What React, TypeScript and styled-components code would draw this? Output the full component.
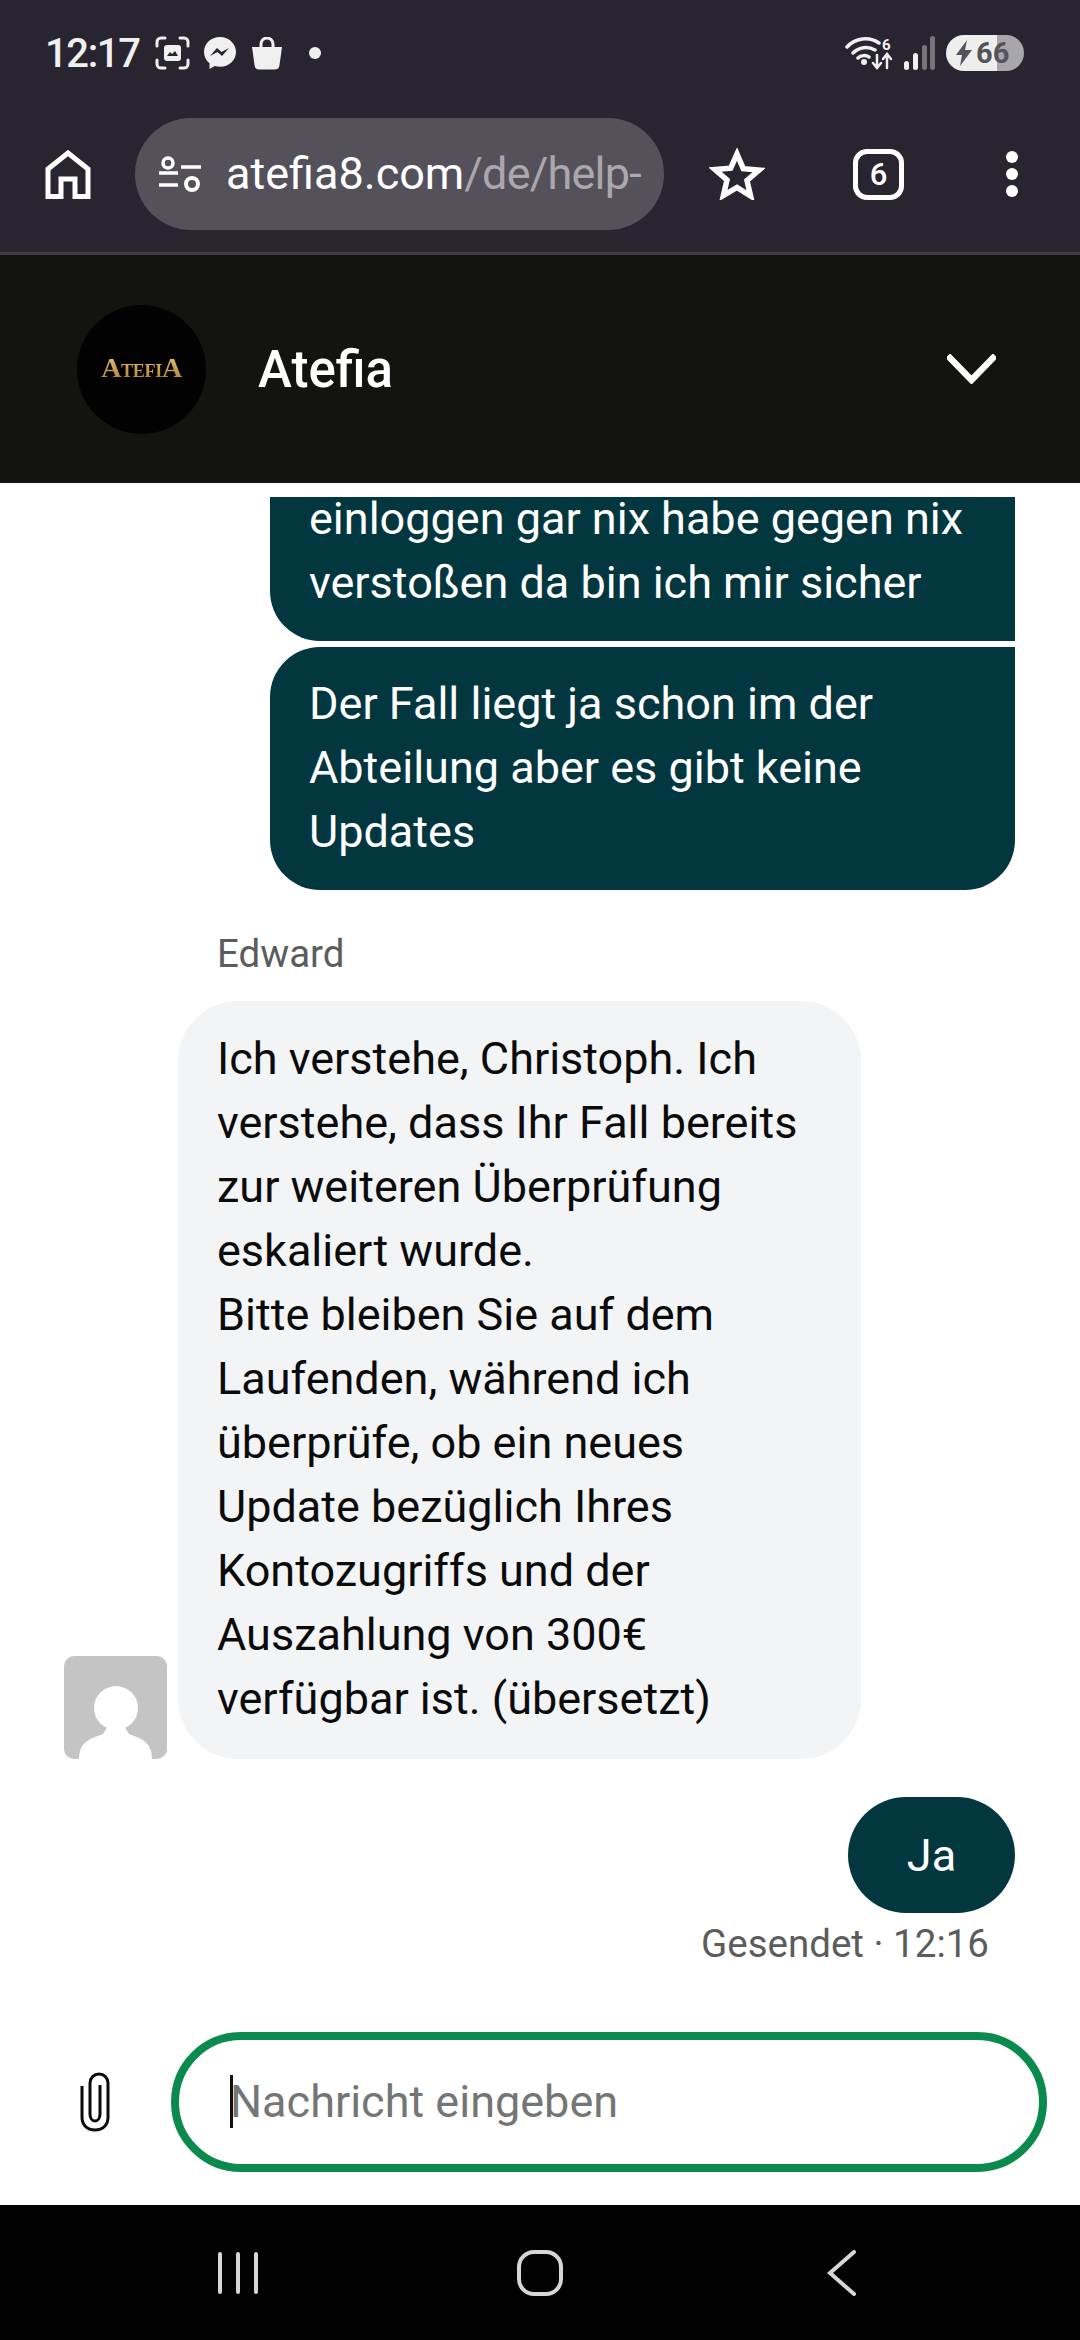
import styled, { createGlobalStyle } from "styled-components";

const GlobalStyle = createGlobalStyle`
  html, body {
    margin: 0;
    padding: 0;
    background: #fff;
    font-family: Roboto, "Liberation Sans", sans-serif;
  }
`;

const Page = styled.div`
  width: 1080px;
  height: 2340px;
  display: flex;
  flex-direction: column;
  overflow: hidden;
  background: #fff;
`;

const Chrome = styled.div`
  height: 252px;
  background: #282430;
  border-bottom: 3px solid #3f3b48;
  flex-shrink: 0;
`;

const StatusBar = styled.div`
  height: 106px;
  padding: 0 56px 0 45px;
  display: flex;
  align-items: center;
  color: #f0f0f0;
`;

const Clock = styled.span`
  font-size: 40px;
  font-weight: 500;
  letter-spacing: -1.4px;
  width: 91px;
  margin-right: 19px;
`;

const StatusGlyph = styled.svg<{ $gap: number }>`
  margin-right: ${(p) => p.$gap}px;
  flex-shrink: 0;
`;

const StatusDot = styled.span`
  width: 12px;
  height: 12px;
  border-radius: 50%;
  background: #f0f0f0;
  margin-left: 12px;
`;

const StatusRight = styled.div`
  margin-left: auto;
  display: flex;
  align-items: center;
`;

const Battery = styled.div`
  width: 78px;
  height: 36px;
  border-radius: 18px;
  background: linear-gradient(90deg, #eeeeee 0 51px, #a8a6aa 51px 100%);
  display: flex;
  align-items: center;
  padding-left: 9px;
  box-sizing: border-box;
  color: #55535a;
  font-size: 29px;
  font-weight: 700;
  gap: 3px;
  white-space: nowrap;
`;

const Toolbar = styled.div`
  height: 146px;
  padding: 0 0 10px 45px;
  box-sizing: border-box;
  display: flex;
  align-items: center;
`;

const HomeIcon = styled.svg`
  margin-right: 44px;
`;

const UrlPill = styled.div`
  width: 529px;
  height: 112px;
  border-radius: 56px;
  background: #55515a;
  display: flex;
  align-items: center;
  padding: 0 20px 0 24px;
  box-sizing: border-box;
  margin-right: 45px;
`;

const UrlIcon = styled.svg`
  flex-shrink: 0;
`;

const UrlText = styled.div`
  margin-left: 25px;
  font-size: 45px;
  line-height: 60px;
  color: #fff;
  white-space: nowrap;
  span {
    color: #aaa7ad;
    letter-spacing: -0.8px;
  }
`;

const StarIcon = styled.svg`
  margin-right: 88px;
`;

const TabCount = styled.div`
  width: 51px;
  height: 51px;
  box-sizing: border-box;
  border: 5px solid #fff;
  border-radius: 14px;
  color: #fff;
  font-size: 31px;
  font-weight: 500;
  display: flex;
  align-items: center;
  justify-content: center;
  margin-right: 102px;
`;

const MenuDots = styled.div`
  display: flex;
  flex-direction: column;
  gap: 5px;
  i {
    display: block;
    width: 12px;
    height: 12px;
    border-radius: 50%;
    background: #fff;
  }
`;

const ChatHeader = styled.header`
  height: 228px;
  flex-shrink: 0;
  background: #131410;
  padding: 0 84px 0 77px;
  display: flex;
  align-items: center;
`;

const LogoCircle = styled.div`
  width: 129px;
  height: 129px;
  border-radius: 50%;
  background: #020202;
  display: flex;
  align-items: center;
  justify-content: center;
  margin-right: 52px;
`;

const LogoText = styled.span`
  font-family: "Liberation Serif", serif;
  font-weight: 700;
  font-size: 18px;
  line-height: 24px;
  letter-spacing: -0.3px;
  background: linear-gradient(180deg, #e8bd6c, #a87a34);
  -webkit-background-clip: text;
  background-clip: text;
  color: transparent;
  b {
    font-size: 28px;
  }
`;

const ChatTitle = styled.h1`
  margin: 0;
  color: #fff;
  font-size: 51px;
  font-weight: 500;
`;

const Collapse = styled.svg`
  margin-left: auto;
`;

const Thread = styled.main`
  flex: 1;
  min-height: 0;
  margin-top: 14px;
  padding-bottom: 35px;
  overflow: hidden;
  display: flex;
  flex-direction: column;
  justify-content: flex-end;
`;

const SentBubble = styled.div<{ $first?: boolean }>`
  flex-shrink: 0;
  align-self: flex-end;
  width: 745px;
  box-sizing: border-box;
  margin: ${(p) => (p.$first ? "0" : "6px")} 65px 0 0;
  padding: ${(p) => (p.$first ? "0" : "25px")} 39px 26px;
  background: #033740;
  color: #fff;
  font-size: 45px;
  line-height: 64px;
  border-radius: ${(p) => (p.$first ? "0 0 0 50px" : "50px 0 50px 50px")};
`;

const SenderName = styled.div`
  margin: 43px 0 26px 217px;
  font-size: 38.5px;
  line-height: 42px;
  color: #5c5c5c;
`;

const AgentRow = styled.div`
  display: flex;
  align-items: flex-end;
  padding-left: 64px;
  gap: 11px;
  flex-shrink: 0;
`;

const Avatar = styled.svg`
  border-radius: 10px;
  flex-shrink: 0;
`;

const AgentBubble = styled.div`
  width: 683px;
  box-sizing: border-box;
  padding: 26px 39px 28px;
  background: #f3f4f6;
  color: #0b0b0b;
  font-size: 45px;
  line-height: 64px;
  border-radius: 60px;
`;

const ShortBubble = styled.div`
  align-self: flex-end;
  flex-shrink: 0;
  height: 116px;
  width: 167px;
  margin: 38px 65px 0 0;
  border-radius: 58px;
  background: #033740;
  color: #fff;
  font-size: 45px;
  display: flex;
  align-items: center;
  justify-content: center;
`;

const MetaLine = styled.div`
  align-self: flex-end;
  flex-shrink: 0;
  margin: 10px 91px 0 0;
  font-size: 38.5px;
  line-height: 42px;
  color: #5c5c5c;
`;

const Composer = styled.div`
  flex-shrink: 0;
  display: flex;
  align-items: center;
  padding: 32px 33px 33px 80px;
`;

const ClipIcon = styled.svg`
  margin-right: 61px;
`;

const InputBox = styled.div`
  flex: 1;
  height: 140px;
  box-sizing: border-box;
  border: 8px solid #0a8a4c;
  border-radius: 70px;
  padding: 0 0 2px 51px;
  display: flex;
  align-items: center;
  color: #757575;
  font-size: 45px;
`;

const Caret = styled.span`
  width: 3px;
  height: 53px;
  background: #111;
  margin-right: -3px;
`;

const NavBar = styled.nav`
  height: 135px;
  flex-shrink: 0;
  background: #020202;
  display: flex;
  justify-content: center;
`;

const NavSlot = styled.div`
  width: 302px;
  display: flex;
  align-items: center;
  justify-content: center;
`;

function App() {
  return (
    <Page>
      <GlobalStyle />
      <Chrome>
        <StatusBar>
          <Clock>12:17</Clock>
          <StatusGlyph $gap={13} width="35" height="34" viewBox="0 0 35 34" fill="none" stroke="#f0f0f0" strokeWidth="3" strokeLinecap="round">
            <path d="M2 10V6a4 4 0 0 1 4-4h4M25 2h4a4 4 0 0 1 4 4v4M33 24v4a4 4 0 0 1-4 4h-4M10 32H6a4 4 0 0 1-4-4v-4" />
            <rect x="9" y="9" width="17" height="16" rx="3" fill="#f0f0f0" stroke="none" />
            <path d="M12 20l3-4 2 2 3-3 3 5z" fill="#282430" stroke="none" />
          </StatusGlyph>
          <StatusGlyph $gap={14} width="34" height="34" viewBox="0 0 34 34">
            <path d="M17 1C8 1 1 7.600 1 16c0 4.600 2 8.500 5.500 11.200V33l5.300-3c1.600.5 3.400.8 5.200.8 9 0 16-6.600 16-14.800S26 1 17 1z" fill="#f0f0f0" />
            <path d="M7 20l7-8 4.500 4 7.500-4-7 8-4.500-4z" fill="#282430" />
          </StatusGlyph>
          <StatusGlyph $gap={14} width="32" height="33" viewBox="0 0 32 33">
            <path d="M10 11V7a6 6 0 0 1 12 0v4" fill="none" stroke="#f0f0f0" strokeWidth="3" />
            <path d="M1 10h30l-2.500 18a5 5 0 0 1-5 4.500h-15a5 5 0 0 1-5-4.500z" fill="#f0f0f0" />
          </StatusGlyph>
          <StatusDot />
          <StatusRight>
            <StatusGlyph $gap={11} width="48" height="34" viewBox="0 0 48 34" fill="none" stroke="#f0f0f0" strokeWidth="3.500" strokeLinecap="round">
              <path d="M2 11C10 2 24 0 34 7M8 17C14 11 23 10 30 14M13 22c3-3 8-3 11-1" />
              <circle cx="19" cy="26" r="3" fill="#f0f0f0" stroke="none" />
              <path d="M32 19v13M28 27l4 5 4-5M42 32V19M38 23l4-5 4 5" strokeWidth="2.500" />
              <text x="37" y="14" fill="#f0f0f0" stroke="none" fontSize="15" fontWeight="700" fontFamily="Roboto, sans-serif">6</text>
            </StatusGlyph>
            <StatusGlyph $gap={11} width="31" height="34" viewBox="0 0 31 34">
              <rect x="0" y="25" width="5" height="9" rx="2.500" fill="#f0f0f0" />
              <rect x="9" y="17" width="5" height="17" rx="2.500" fill="#f0f0f0" />
              <rect x="18" y="9" width="5" height="25" rx="2.500" fill="#77747c" />
              <rect x="26" y="0" width="5" height="34" rx="2.500" fill="#77747c" />
            </StatusGlyph>
            <Battery>
              <svg width="18" height="26" viewBox="0 0 18 26">
                <path d="M12 0L1 15h6l-2 11 12-16h-7z" fill="#55535a" />
              </svg>
              66
            </Battery>
          </StatusRight>
        </StatusBar>
        <Toolbar>
          <HomeIcon width="46" height="49" viewBox="0 0 46 49" fill="none" stroke="#fff" strokeWidth="5">
            <path d="M3 46.500V19L23 3l20 16v27.500H30V29H16v17.500z" />
          </HomeIcon>
          <UrlPill>
            <UrlIcon width="42" height="36" viewBox="0 0 42 36" fill="none" stroke="#fff" strokeWidth="3.500">
              <circle cx="9" cy="7" r="5" />
              <path d="M22 11h20M0 17h19M0 29h19" />
              <circle cx="33" cy="28" r="6" strokeWidth="4" />
            </UrlIcon>
            <UrlText>
              atefia8.com<span>/de/help-</span>
            </UrlText>
          </UrlPill>
          <StarIcon width="56" height="52" viewBox="0 0 56 52" fill="none" stroke="#fff" strokeWidth="5.500">
            <path d="M28 6l6.300 14.700 15.700 1.400-12 10.400 3.600 15.500L28 39.500 14.400 47.500 18 32 6 21.600l15.700-1.400z" />
          </StarIcon>
          <TabCount>6</TabCount>
          <MenuDots>
            <i />
            <i />
            <i />
          </MenuDots>
        </Toolbar>
      </Chrome>

      <ChatHeader>
        <LogoCircle>
          <LogoText>
            <b>A</b>TEFI<b>A</b>
          </LogoText>
        </LogoCircle>
        <ChatTitle>Atefia</ChatTitle>
        <Collapse width="49" height="30" viewBox="0 0 49 30" fill="none" stroke="#fff" strokeWidth="6.500" strokeLinecap="square">
          <path d="M3 4l21.500 22L46 4" />
        </Collapse>
      </ChatHeader>

      <Thread>
        <SentBubble $first>
          einloggen gar nix habe gegen nix verstoßen da bin ich mir sicher
        </SentBubble>
        <SentBubble>Der Fall liegt ja schon im der Abteilung aber es gibt keine Updates</SentBubble>
        <SenderName>Edward</SenderName>
        <AgentRow>
          <Avatar width="103" height="103" viewBox="0 0 103 103">
            <rect width="103" height="103" fill="#c4c4c4" />
            <circle cx="52" cy="52" r="22" fill="#fff" />
            <path d="M15 103C15 88 23 83 39 78l5-8h16l5 8c15 5 23 10 23 25z" fill="#fff" />
          </Avatar>
          <AgentBubble>
            Ich verstehe, Christoph. Ich verstehe, dass Ihr Fall bereits zur weiteren Überprüfung
            eskaliert wurde.
            <br />
            Bitte bleiben Sie auf dem Laufenden, während ich überprüfe, ob ein neues Update
            bezüglich Ihres Kontozugriffs und der Auszahlung von 300€ verfügbar ist. (übersetzt)
          </AgentBubble>
        </AgentRow>
        <ShortBubble>Ja</ShortBubble>
        <MetaLine>Gesendet · 12:16</MetaLine>
      </Thread>

      <Composer>
        <ClipIcon width="30" height="60" viewBox="0 0 30 60" fill="none" stroke="#0b0b0b" strokeWidth="3">
          <path d="M2 14v31c0 8 5 13 13 13s13-5 13-13V11c0-5-4-9-9-9s-9 4-9 9v31c0 4 2 7 5 7s5-3 5-7V13" />
        </ClipIcon>
        <InputBox>
          <Caret />
          Nachricht eingeben
        </InputBox>
      </Composer>

      <NavBar>
        <NavSlot>
          <svg width="40" height="42" viewBox="0 0 40 42" fill="none" stroke="#d6d6d6" strokeWidth="4" strokeLinecap="round">
            <path d="M2 2v38M20 2v38M38 2v38" />
          </svg>
        </NavSlot>
        <NavSlot>
          <svg width="46" height="46" viewBox="0 0 46 46" fill="none" stroke="#d6d6d6" strokeWidth="4">
            <rect x="2" y="2" width="42" height="42" rx="15" />
          </svg>
        </NavSlot>
        <NavSlot>
          <svg width="30" height="46" viewBox="0 0 30 46" fill="none" stroke="#d6d6d6" strokeWidth="4" strokeLinecap="round">
            <path d="M27 2L3 23l24 21" />
          </svg>
        </NavSlot>
      </NavBar>
    </Page>
  );
}

export default App;
